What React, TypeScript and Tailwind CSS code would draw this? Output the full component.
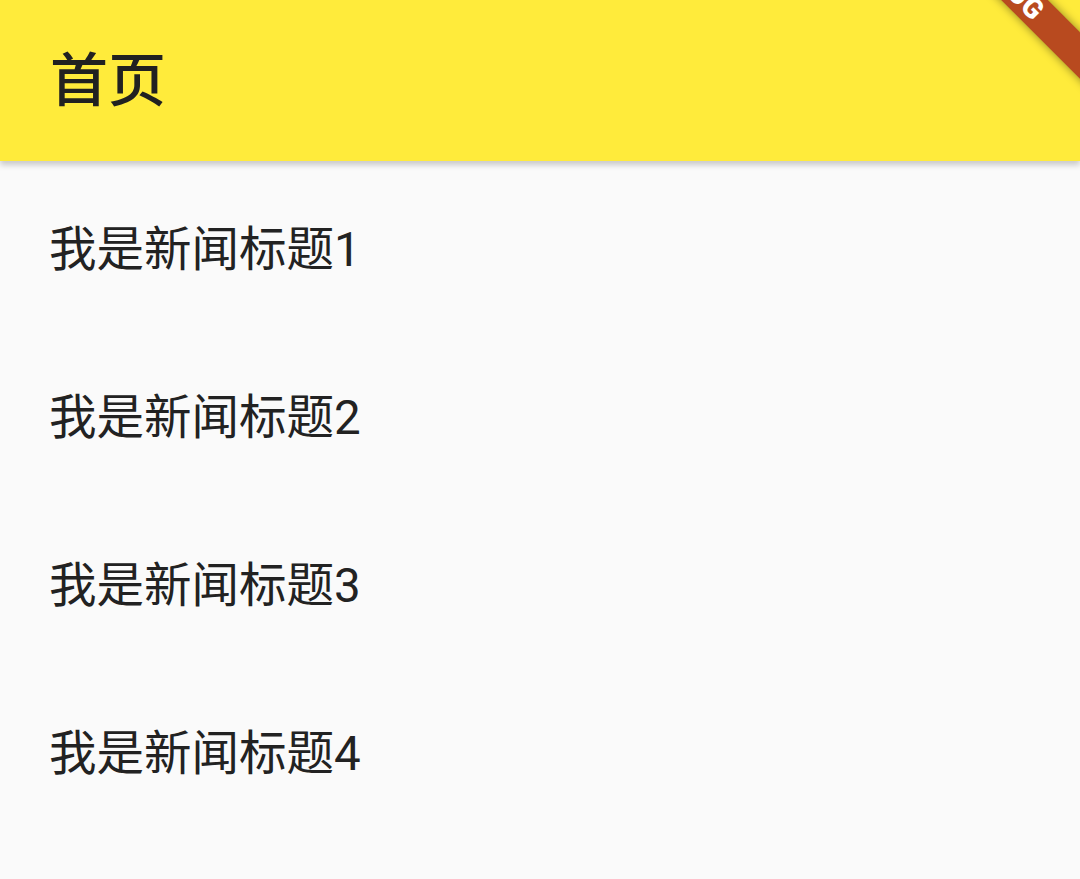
import React from 'react';

const news = [1, 2, 3, 4].map(n => `我是新闻标题${n}`);

// Corner ribbon shown on debug builds
const DebugBanner: React.FC = () => (
    <div className="pointer-events-none absolute inset-0 z-20 overflow-hidden">
        <div
            className="absolute left-[857px] top-[-34px] flex h-[33px] w-[300px] rotate-45 items-center justify-center bg-[#b84a1f] text-[28px] leading-none font-black tracking-[0.5px] text-white shadow-[0_0_10px_rgba(0,0,0,0.45)]"
            style={{ fontFamily: 'Roboto, "Liberation Sans", sans-serif' }}
        >
            DEBUG
        </div>
    </div>
);

export default function App() {
    return (
        <div
            className="relative flex h-[879px] w-[1080px] flex-col overflow-hidden bg-[#fafafa]"
            style={{ fontFamily: 'Roboto, "Noto Sans CJK SC", sans-serif' }}
        >
            {/* App bar */}
            <header className="relative z-10 flex h-[161px] shrink-0 items-center bg-[#ffeb3b] px-[50px] shadow-[0_4px_6px_rgba(0,0,0,0.2)]">
                <h1 className="text-[58px] leading-none font-medium text-[#212121]">首页</h1>
            </header>

            {/* News list */}
            <ul className="flex flex-col pt-[6px]">
                {news.map(title => (
                    <li key={title} className="flex h-[168px] items-center px-[49px]">
                        <span className="text-[47.5px] leading-none text-[#222222]">{title}</span>
                    </li>
                ))}
            </ul>

            <DebugBanner />
        </div>
    );
}
